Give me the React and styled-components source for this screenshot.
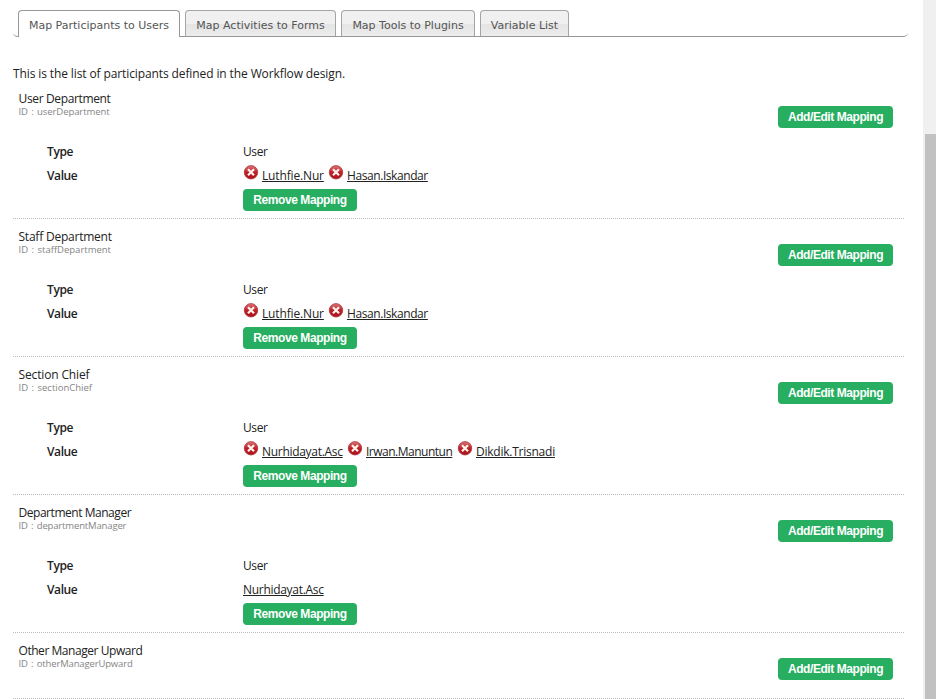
import React from 'react';
import styled, { createGlobalStyle } from 'styled-components';

const GlobalStyle = createGlobalStyle`
  * { box-sizing: border-box; }
  html, body { margin: 0; height: 100%; overflow: hidden; background: #fff; }
  body { font-family: "Open Sans", "Noto Sans", sans-serif; font-size: 12px; color: #222; }
`;

const Page = styled.div`
  display: flex;
  width: 936px;
  height: 699px;
  overflow: hidden;
`;

const Content = styled.main`
  width: 923px;
  flex: none;
  padding: 10px 16px 0 13px;
`;

const ScrollTrack = styled.aside`
  width: 13px;
  padding: 134px 0 0 2px;
  background: #f0f0f0;
`;

const ScrollThumb = styled.div`
  height: 565px;
  background: #c1c1c1;
`;

const Tabs = styled.nav`
  display: flex;
  gap: 5px;
  width: 895px;
  height: 27px;
  padding-left: 5px;
  position: relative;
  &::before, &::after {
    content: "";
    position: absolute;
    bottom: 0;
    height: 4px;
    border-bottom: 1px solid #979797;
  }
  &::before { left: 0; width: 6px; border-bottom-left-radius: 5px 4px; }
  &::after { left: 166px; right: 0; border-bottom-right-radius: 5px 4px; }
`;

const Tab = styled.button`
  width: ${(p) => p.$width}px;
  height: ${(p) => (p.$active ? 27 : 26)}px;
  padding: ${(p) => (p.$active ? 2 : 3)}px 0 0;
  border: 1px solid ${(p) => (p.$active ? '#979797' : '#a5a5a5')};
  border-bottom: 0;
  border-radius: 4px 4px 0 0;
  background: ${(p) => (p.$active ? '#fff' : 'linear-gradient(#f0f0f0 0 50%, #e4e4e4 50%, #ececec)')};
  color: #555;
  font: 11px "DejaVu Sans", Verdana, sans-serif;
  white-space: nowrap;
  position: relative;
  z-index: 1;
`;

const Intro = styled.p`
  height: 44px;
  margin: 0;
  padding-top: 28px;
  line-height: 18px;
  letter-spacing: -0.11px;
  white-space: nowrap;
`;

const Participant = styled.section`
  height: ${(p) => (p.$short ? 66 : 138)}px;
  width: 891px;
  border-bottom: 1px dotted #bbb;
`;

const Header = styled.header`
  display: flex;
  justify-content: space-between;
  height: 59px;
  padding: 10px 11px 0 5.5px;
`;

const Name = styled.h2`
  margin: 0;
  font-size: 12px;
  font-weight: 400;
  line-height: 16px;
  letter-spacing: ${(p) => p.$track}px;
`;

const Identifier = styled.div`
  color: #858585;
  font-size: 9.5px;
  line-height: 10px;
  word-spacing: 1px;
  letter-spacing: ${(p) => p.$track}px;
`;

const MappingButton = styled.button`
  display: block;
  width: ${(p) => p.$width}px;
  height: 22px;
  margin-top: ${(p) => p.$top}px;
  padding: 0;
  border: 0;
  border-radius: 4px;
  background: #27ae60;
  color: #fff;
  font: bold 12px/22px "Liberation Sans", Arial, sans-serif;
  letter-spacing: -0.43px;
  white-space: nowrap;
`;

const Details = styled.dl`
  display: grid;
  grid-template-columns: 196px 1fr;
  grid-template-rows: 24px 24px 23px;
  margin: 0;
  padding-left: 34px;
  line-height: 24px;
`;

const Label = styled.dt`
  font-weight: 600;
  letter-spacing: -0.4px;
`;

const Value = styled.dd`
  display: flex;
  margin: 0;
  grid-column: 2;
  letter-spacing: -0.4px;
`;

const User = styled.span`
  display: flex;
  width: ${(p) => p.$width}px;
  white-space: nowrap;
`;

const UserLink = styled.a`
  color: #222;
  text-decoration: underline;
  text-underline-offset: 1px;
  letter-spacing: ${(p) => p.$track}px;
`;

const Icon = styled.svg`
  flex: none;
  width: 16px;
  height: 16px;
  margin-right: 3px;
`;

const RemoveIcon = () => (
  <Icon viewBox="0 0 16 16" aria-label="Remove">
    <defs>
      <linearGradient id="red" x1="0" y1="0" x2="0" y2="1">
        <stop offset="0" stopColor="#dc777b" />
        <stop offset=".5" stopColor="#bd2028" />
        <stop offset="1" stopColor="#a9121b" />
      </linearGradient>
    </defs>
    <circle cx="8" cy="8.3" r="6.7" fill="url(#red)" stroke="#b0343c" strokeWidth=".8" />
    <path d="M5 5.3l6 6M11 5.3l-6 6" stroke="#fff5ec" strokeWidth="2.2" />
  </Icon>
);

const names = {
  luthfie: { name: 'Luthfie.Nur', width: 85, track: -0.15 },
  hasan: { name: 'Hasan.Iskandar', width: 105, track: -0.42 },
  nur: { name: 'Nurhidayat.Asc', width: 104, track: -0.3 },
  irwan: { name: 'Irwan.Manuntun', width: 110, track: -0.5 },
  dikdik: { name: 'Dikdik.Trisnadi', width: 100, track: -0.24 },
};

const participants = [
  { name: 'User Department', id: 'userDepartment', track: -0.36, idTrack: -0.08, users: [names.luthfie, names.hasan] },
  { name: 'Staff Department', id: 'staffDepartment', track: -0.22, idTrack: 0, users: [names.luthfie, names.hasan] },
  { name: 'Section Chief', id: 'sectionChief', track: -0.14, idTrack: 0, users: [names.nur, names.irwan, names.dikdik] },
  { name: 'Department Manager', id: 'departmentManager', track: -0.46, idTrack: -0.15, users: [names.nur], single: true },
  { name: 'Other Manager Upward', id: 'otherManagerUpward', track: -0.45, idTrack: -0.15 },
];

export default function App() {
  return (
    <>
      <GlobalStyle />
      <Page>
        <Content>
          <Tabs>
            <Tab $active $width={162}>Map Participants to Users</Tab>
            <Tab $width={151}>Map Activities to Forms</Tab>
            <Tab $width={134}>Map Tools to Plugins</Tab>
            <Tab $width={89}>Variable List</Tab>
          </Tabs>
          <Intro>This is the list of participants defined in the Workflow design.</Intro>
          {participants.map((p) => (
            <Participant key={p.id} $short={!p.users}>
              <Header>
                <div>
                  <Name $track={p.track}>{p.name}</Name>
                  <Identifier $track={p.idTrack}>ID : {p.id}</Identifier>
                </div>
                <MappingButton $width={115} $top={15}>Add/Edit Mapping</MappingButton>
              </Header>
              {p.users && (
                <Details>
                  <Label>Type</Label>
                  <Value>User</Value>
                  <Label>Value</Label>
                  <Value>
                    {p.users.map((u) => (
                      <User key={u.name} $width={u.width}>
                        {!p.single && <RemoveIcon />}
                        <UserLink $track={u.track}>{u.name}</UserLink>
                      </User>
                    ))}
                  </Value>
                  <Value><MappingButton $width={114} $top={1}>Remove Mapping</MappingButton></Value>
                </Details>
              )}
            </Participant>
          ))}
        </Content>
        <ScrollTrack><ScrollThumb /></ScrollTrack>
      </Page>
    </>
  );
}
